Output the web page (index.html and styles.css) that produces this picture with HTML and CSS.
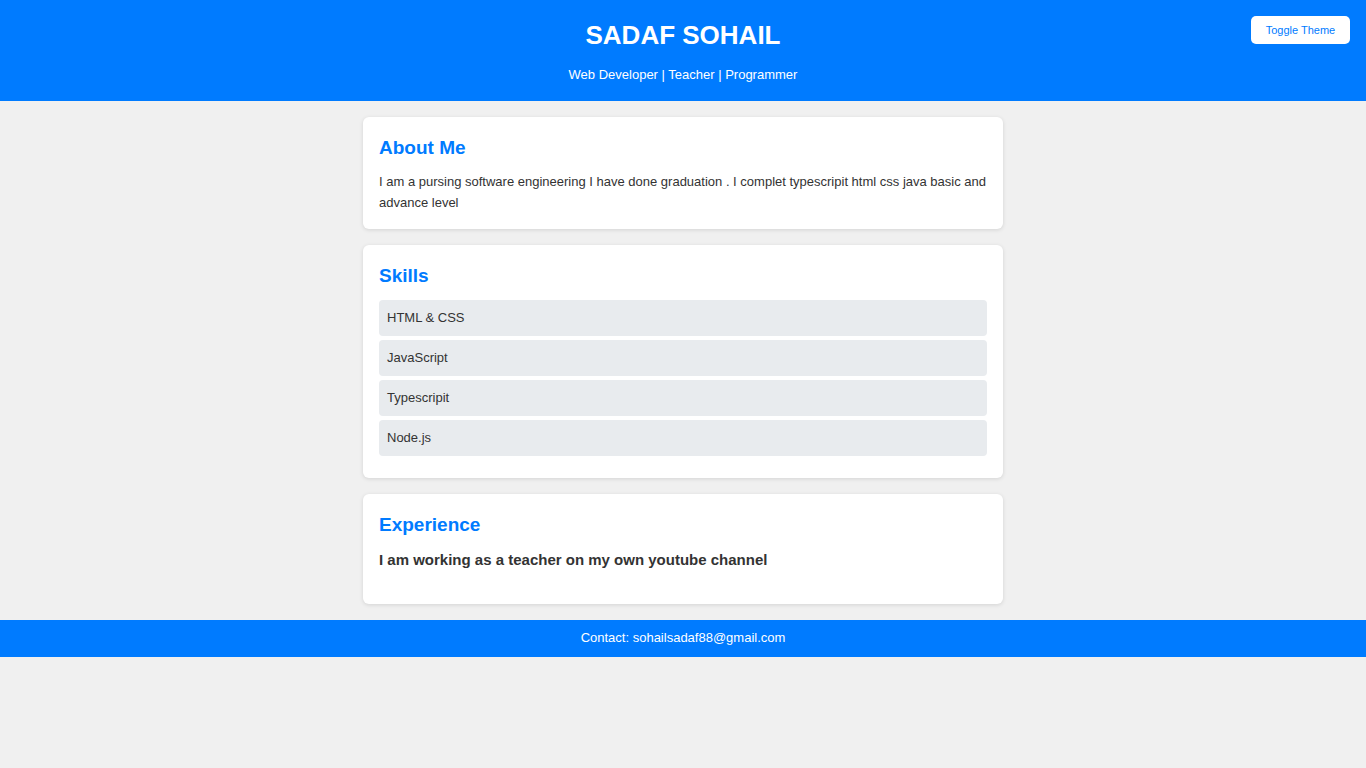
FILE: index.html
```html
<!DOCTYPE html>
<html lang="en">
<head>
<meta charset="UTF-8">
<title>Sadaf Sohail</title>
<link rel="stylesheet" href="styles.css">
</head>
<body>
<header class="site-header">
  <h1 class="name">SADAF SOHAIL</h1>
  <p class="tagline">Web Developer | Teacher | Programmer</p>
  <button class="theme-toggle">Toggle Theme</button>
</header>
<main class="container">
  <section class="card">
    <h2 class="card-title">About Me</h2>
    <p class="about-text">I am a pursing software engineering I have done graduation . I complet typescripit html css java basic and advance level</p>
  </section>
  <section class="card">
    <h2 class="card-title">Skills</h2>
    <ul class="skills">
      <li class="skill">HTML &amp; CSS</li>
      <li class="skill">JavaScript</li>
      <li class="skill">Typescripit</li>
      <li class="skill">Node.js</li>
    </ul>
  </section>
  <section class="card">
    <h2 class="card-title">Experience</h2>
    <h3 class="exp-text">I am working as a teacher on my own youtube channel</h3>
  </section>
</main>
<footer class="site-footer">
  <p class="contact">Contact: sohailsadaf88@gmail.com</p>
</footer>
</body>
</html>
```
FILE: styles.css
```css
* { box-sizing: border-box; }
body {
  margin: 0;
  background: #f0f0f0;
  color: #333;
  font-family: "Liberation Sans", Arial, sans-serif;
}
.site-header {
  position: relative;
  background: #007bff;
  color: #fff;
  text-align: center;
  height: 101px;
  padding-top: 18px;
}
.name {
  margin: 0;
  font-size: 26px;
  line-height: 34px;
  font-weight: bold;
}
.tagline {
  margin: 15px 0 0;
  font-size: 13px;
  line-height: 16px;
}
.theme-toggle {
  position: absolute;
  top: 16px;
  right: 16px;
  width: 99px;
  height: 28px;
  background: #fff;
  color: #007bff;
  border: none;
  border-radius: 5px;
  font-family: "Liberation Sans", Arial, sans-serif;
  font-size: 11px;
  cursor: pointer;
}
.container {
  width: 640px;
  margin: 16px auto;
}
.card {
  background: #fff;
  border-radius: 6px;
  padding: 16px;
  margin-bottom: 16px;
  box-shadow: 0 1px 4px rgba(0,0,0,0.12);
}
.card-title {
  margin: 0 0 9px;
  padding-top: 1px;
  font-size: 19px;
  line-height: 28px;
  color: #007bff;
}
.about-text {
  margin: 0;
  font-size: 13px;
  line-height: 21px;
}
.skills {
  list-style: none;
  margin: 10px 0 0;
  padding: 0 0 2px;
}
.skill {
  background: #e8ebee;
  border-radius: 4px;
  padding: 8px;
  font-size: 13px;
  line-height: 20px;
  margin-bottom: 4px;
}
.exp-text {
  margin: 12px 0 19px;
  font-size: 15px;
  line-height: 18px;
}
.site-footer {
  background: #007bff;
  color: #fff;
  text-align: center;
  padding: 9px 0 11px;
}
.contact {
  margin: 0;
  font-size: 13px;
  line-height: 17px;
}
```
